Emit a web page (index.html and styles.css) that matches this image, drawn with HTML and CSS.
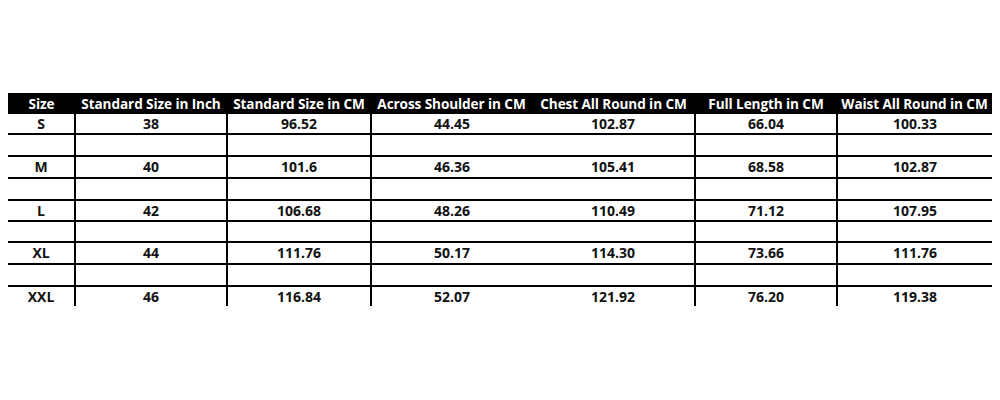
FILE: index.html
```html
<!DOCTYPE html>
<html lang="en">
<head>
<meta charset="utf-8">
<title>Size Chart</title>
<link rel="stylesheet" href="styles.css">
</head>
<body>
<div class="page">
  <table class="chart">
    <colgroup>
      <col class="c1"><col class="c2"><col class="c3"><col class="c4"><col class="c5"><col class="c6"><col class="c7">
    </colgroup>
    <thead>
      <tr>
        <th>Size</th>
        <th>Standard Size in Inch</th>
        <th>Standard Size in CM</th>
        <th>Across Shoulder in CM</th>
        <th>Chest All Round in CM</th>
        <th>Full Length in CM</th>
        <th>Waist All Round in CM</th>
      </tr>
    </thead>
    <tbody>
      <tr class="r21"><td>S</td><td>38</td><td>96.52</td><td class="nosep">44.45</td><td>102.87</td><td>66.04</td><td>100.33</td></tr>
      <tr class="r22 blank"><td></td><td></td><td></td><td class="nosep"></td><td></td><td></td><td></td></tr>
      <tr class="r22"><td>M</td><td>40</td><td>101.6</td><td class="nosep">46.36</td><td>105.41</td><td>68.58</td><td>102.87</td></tr>
      <tr class="r22 blank"><td></td><td></td><td></td><td class="nosep"></td><td></td><td></td><td></td></tr>
      <tr class="r21"><td>L</td><td>42</td><td>106.68</td><td class="nosep">48.26</td><td>110.49</td><td>71.12</td><td>107.95</td></tr>
      <tr class="r21 blank"><td></td><td></td><td></td><td class="nosep"></td><td></td><td></td><td></td></tr>
      <tr class="r22"><td>XL</td><td>44</td><td>111.76</td><td class="nosep">50.17</td><td>114.30</td><td>73.66</td><td>111.76</td></tr>
      <tr class="r22 blank"><td></td><td></td><td></td><td class="nosep"></td><td></td><td></td><td></td></tr>
      <tr class="last"><td>XXL</td><td>46</td><td>116.84</td><td class="nosep">52.07</td><td>121.92</td><td>76.20</td><td>119.38</td></tr>
    </tbody>
  </table>
</div>
</body>
</html>
```

FILE: styles.css
```css
html, body {
  margin: 0;
  padding: 0;
  background: #ffffff;
}

.page {
  padding: 93px 8px 0 8px;
  width: 984px;
}

.chart {
  width: 984px;
  border-collapse: collapse;
  table-layout: fixed;
  font-family: "Open Sans", Lato, sans-serif;
  font-weight: 700;
  font-size: 14px;
  line-height: 1;
  color: #111;
}

.c1 { width: 67px; }
.c2 { width: 152px; }
.c3 { width: 144px; }
.c4 { width: 161px; }
.c5 { width: 163px; }
.c6 { width: 142px; }
.c7 { width: 155px; }

.chart th {
  background: #000;
  color: #fff;
  height: 21px;
  padding: 0;
  text-align: center;
  white-space: nowrap;
  font-weight: 700;
  font-size: 13.6px;
  letter-spacing: -0.1px;
}

.chart td {
  padding: 0;
  text-align: center;
  border-right: 2px solid #000;
  border-bottom: 2px solid #000;
  white-space: nowrap;
}

.chart td:last-child {
  border-right: none;
}

.chart td.nosep {
  border-right: none;
}

.r21 td { height: 19px; }
.r22 td { height: 20px; }

.last td {
  height: 19px;
  border-bottom: none;
}
```
